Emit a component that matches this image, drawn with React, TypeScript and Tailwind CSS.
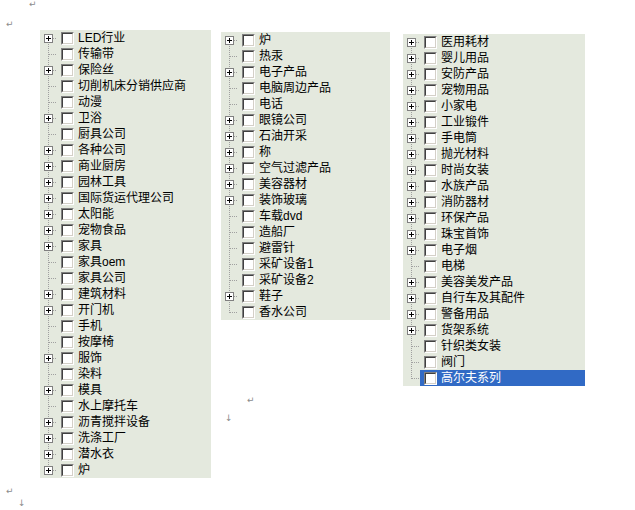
import React from "react";

// Types
type Item = [label: string, hasChildren: boolean];

const col1: Item[] = [
  ["LED行业", true],
  ["传输带", false],
  ["保险丝", true],
  ["切削机床分销供应商", false],
  ["动漫", false],
  ["卫浴", true],
  ["厨具公司", false],
  ["各种公司", true],
  ["商业厨房", true],
  ["园林工具", true],
  ["国际货运代理公司", true],
  ["太阳能", true],
  ["宠物食品", true],
  ["家具", true],
  ["家具oem", false],
  ["家具公司", false],
  ["建筑材料", true],
  ["开门机", true],
  ["手机", false],
  ["按摩椅", false],
  ["服饰", true],
  ["染料", false],
  ["模具", true],
  ["水上摩托车", false],
  ["沥青搅拌设备", true],
  ["洗涤工厂", true],
  ["潜水衣", true],
  ["炉", true],
];

const col2: Item[] = [
  ["炉", true],
  ["热汞", false],
  ["电子产品", true],
  ["电脑周边产品", false],
  ["电话", false],
  ["眼镜公司", true],
  ["石油开采", true],
  ["称", true],
  ["空气过滤产品", true],
  ["美容器材", true],
  ["装饰玻璃", true],
  ["车载dvd", false],
  ["造船厂", false],
  ["避雷针", false],
  ["采矿设备1", false],
  ["采矿设备2", false],
  ["鞋子", true],
  ["香水公司", false],
];

const col3: Item[] = [
  ["医用耗材", true],
  ["婴儿用品", true],
  ["安防产品", true],
  ["宠物用品", true],
  ["小家电", true],
  ["工业锻件", true],
  ["手电筒", true],
  ["抛光材料", true],
  ["时尚女装", true],
  ["水族产品", true],
  ["消防器材", true],
  ["环保产品", true],
  ["珠宝首饰", true],
  ["电子烟", true],
  ["电梯", false],
  ["美容美发产品", true],
  ["自行车及其配件", true],
  ["警备用品", true],
  ["货架系统", true],
  ["针织类女装", false],
  ["阀门", false],
  ["高尔夫系列", false],
];

// tree connector: dotted lines + expand box
const Connector: React.FC<{ plus: boolean; first: boolean; last: boolean }> = ({
  plus,
  first,
  last,
}) => (
  <svg width="17" height="16" className="shrink-0">
    <line
      x1="8.5"
      x2="8.5"
      y1={first ? 8 : 0}
      y2={last ? 9 : 16}
      stroke="#a0a0a0"
      strokeDasharray="1 1"
    />
    <line x1="9" x2="17" y1="8.5" y2="8.5" stroke="#a0a0a0" strokeDasharray="1 1" />
    {plus && (
      <>
        <rect x="4.5" y="4.5" width="8" height="8" fill="#ffffff" stroke="#808080" />
        <path d="M6 8.5h5M8.5 6v5" stroke="#000000" />
      </>
    )}
  </svg>
);

const Checkbox: React.FC = () => (
  <div className="h-[13px] w-[13px] shrink-0 border border-t-[#808080] border-l-[#808080] border-b-white border-r-white">
    <div className="h-full w-full border border-t-[#404040] border-l-[#404040] border-b-[#d4d0c8] border-r-[#d4d0c8] bg-white" />
  </div>
);

const Tree: React.FC<{ items: Item[]; width: string; selected?: string }> = ({
  items,
  width,
  selected,
}) => (
  <div className={`${width} bg-[#e4e9de]`}>
    {items.map(([label, plus], i) => {
      const isSel = label === selected;
      return (
        <div key={label + i} className="flex h-4 items-center">
          <Connector plus={plus} first={i === 0} last={i === items.length - 1} />
          <div
            className={`flex h-full flex-1 items-center gap-1 pl-1 ${
              isSel ? "bg-[#316ac5] text-white" : "text-black"
            }`}
          >
            <Checkbox />
            <span className="whitespace-nowrap text-[12px] leading-4">{label}</span>
          </div>
        </div>
      );
    })}
  </div>
);

const Mark: React.FC<{ children: React.ReactNode; className?: string }> = ({
  children,
  className = "",
}) => (
  <div className={`font-['DejaVu_Sans',sans-serif] text-[9px] leading-none text-[#8c8c8c] ${className}`}>
    {children}
  </div>
);

const App: React.FC = () => {
  return (
    <div className="h-[510px] w-[635px] overflow-hidden bg-white font-['Liberation_Sans','Noto_Sans_CJK_SC',sans-serif]">
      <div className="h-[20px] pl-[29px]">
        <Mark>↵</Mark>
      </div>
      <div className="h-[10px] pl-[6px]">
        <Mark>↵</Mark>
      </div>

      <div className="flex items-start pl-[40px]">
        <Tree items={col1} width="w-[171px]" />

        <div className="ml-[10px] mt-[2px]">
          <Tree items={col2} width="w-[169px]" />
          <Mark className="mt-[76px] pl-[26px]">↵</Mark>
          <Mark className="mt-[9px] pl-[4px]">↓</Mark>
        </div>

        <div className="ml-[13px] mt-[4px]">
          <Tree items={col3} width="w-[182px]" selected="高尔夫系列" />
        </div>
      </div>

      <Mark className="mt-[9px] pl-[6px]">↵</Mark>
      <Mark className="mt-[3px] pl-[18px]">↓</Mark>
    </div>
  );
};

export default App;
